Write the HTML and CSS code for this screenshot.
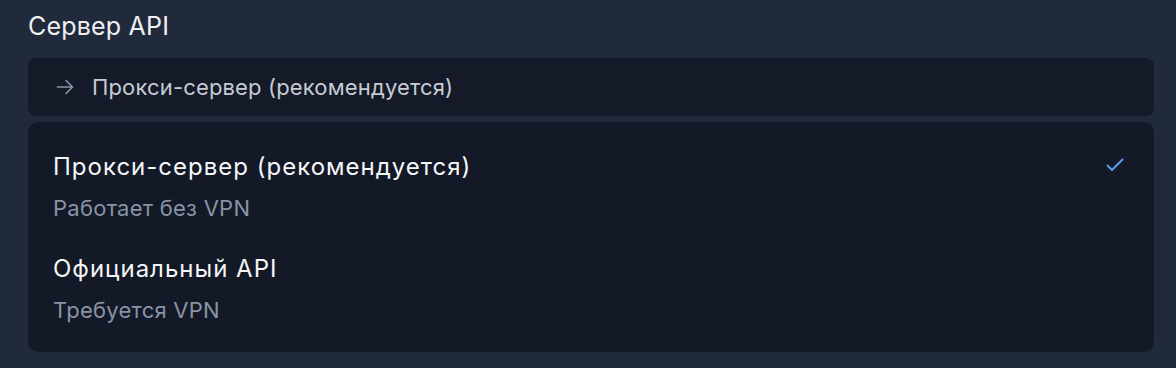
FILE: index.html
```html
<!DOCTYPE html>
<html lang="ru">
<head>
<meta charset="utf-8">
<link rel="stylesheet" href="styles.css">
</head>
<body>
<div class="field">
  <div class="label">Сервер API</div>
  <div class="trigger">
    <svg class="arrow" width="18" height="16" viewBox="0 0 18 16" fill="none" stroke="currentColor" stroke-width="1.6" stroke-linecap="round" stroke-linejoin="round"><path d="M1.5 8h15M10 1.5L16.5 8 10 14.5"/></svg>
    <span class="trigger-text">Прокси-сервер (рекомендуется)</span>
  </div>
  <div class="menu">
    <div class="option">
      <div class="option-main">
        <div class="option-title">Прокси-сервер (рекомендуется)</div>
        <div class="option-sub">Работает без VPN</div>
      </div>
      <svg class="check" width="18" height="14" viewBox="0 0 18 14" fill="none" stroke="currentColor" stroke-width="2" stroke-linecap="round" stroke-linejoin="round"><path d="M1.5 7.5l4.5 4.5L16.5 1.5"/></svg>
    </div>
    <div class="option">
      <div class="option-main">
        <div class="option-title">Официальный API</div>
        <div class="option-sub">Требуется VPN</div>
      </div>
    </div>
  </div>
</div>
</body>
</html>
```
FILE: styles.css
```css
html, body {
  margin: 0;
  height: 100%;
}
body {
  background: #212a3b;
  font-family: Inter, "Noto Sans", sans-serif;
  color: #e6e8ec;
}
.field {
  padding: 11px 22px 0 28px;
  display: flex;
  flex-direction: column;
}
.label {
  font-size: 25px;
  line-height: 30px;
  letter-spacing: 0.2px;
  color: #eef0f3;
}
.trigger {
  margin-top: 17px;
  height: 58px;
  background: #141a27;
  border-radius: 8px;
  display: flex;
  align-items: center;
  padding-left: 28px;
  gap: 18px;
  color: #c7cbd3;
}
.arrow {
  color: #8c95a6;
  flex: none;
}
.trigger-text {
  font-size: 22px;
  letter-spacing: 0.15px;
}
.menu {
  margin-top: 6px;
  background: #131926;
  border-radius: 10px;
  padding: 30px 30px 29px 25px;
  display: flex;
  flex-direction: column;
  gap: 33px;
}
.option {
  display: flex;
  align-items: flex-start;
  justify-content: space-between;
}
.option-title {
  font-size: 24px;
  font-weight: 400;
  letter-spacing: 1px;
  line-height: 30px;
  color: #f5f6f8;
}
.option-sub {
  font-size: 22px;
  line-height: 26px;
  letter-spacing: 0.25px;
  margin-top: 13px;
  color: #8a93a5;
}
.check {
  color: #5b9cf0;
  margin-top: 6px;
}
```
